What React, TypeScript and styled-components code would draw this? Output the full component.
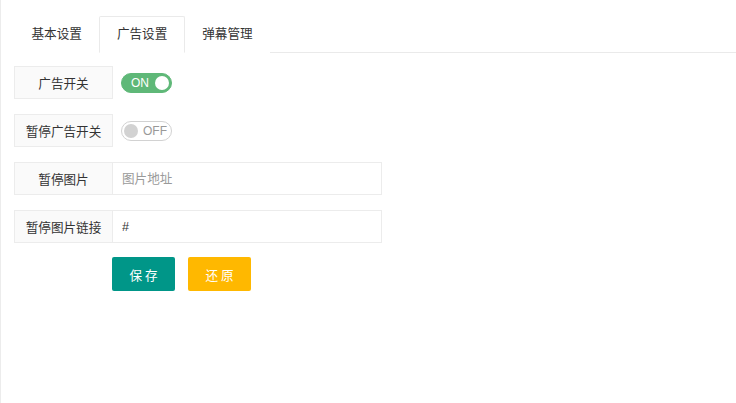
import React from 'react';
import styled, { createGlobalStyle } from 'styled-components';

const GlobalStyle = createGlobalStyle`
  html, body {
    margin: 0;
    padding: 0;
    background: #fff;
  }
  body {
    font-family: "Liberation Sans", "Noto Sans CJK SC", sans-serif;
    color: #333;
  }
  * { box-sizing: border-box; }
`;

const tabs = ['基本设置', '广告设置', '弹幕管理'];

const Switch = ({ on }: { on: boolean }) => (
  <SwitchBox $on={on}>
    {on ? <SwitchText $on>ON</SwitchText> : null}
    <Knob $on={on} />
    {on ? null : <SwitchText $on={false}>OFF</SwitchText>}
  </SwitchBox>
);

const App = () => (
  <Page>
    <GlobalStyle />
    <TabTitle>
      {tabs.map((t, i) => (
        <TabItem key={t} $active={i === 1}>{t}</TabItem>
      ))}
    </TabTitle>
    <Form>
      <Row>
        <Label>广告开关</Label>
        <Field><Switch on /></Field>
      </Row>
      <Row>
        <Label>暂停广告开关</Label>
        <Field><Switch on={false} /></Field>
      </Row>
      <Row>
        <Label>暂停图片</Label>
        <Input placeholder="图片地址" defaultValue="" />
      </Row>
      <Row>
        <Label>暂停图片链接</Label>
        <Input defaultValue="#" />
      </Row>
      <Actions>
        <Button $color="#009688">保存</Button>
        <Button $color="#FFB800">还原</Button>
      </Actions>
    </Form>
  </Page>
);

export default App;

const Page = styled.div`
  min-height: 100vh;
  border-left: 1px solid #ececec;
  padding: 16px 0 0 13px;
`;

const TabTitle = styled.ul`
  display: flex;
  margin: 0;
  padding: 0;
  list-style: none;
  height: 37px;
  border-bottom: 1px solid #eaeaea;
`;

const TabItem = styled.li<{ $active: boolean }>`
  height: 37px;
  line-height: 35px;
  padding: 0 16.5px;
  font-size: 12.6px;
  color: #333;
  border: 1px solid ${({ $active }) => ($active ? '#eaeaea' : 'transparent')};
  border-bottom-color: ${({ $active }) => ($active ? '#fff' : 'transparent')};
  background: #fff;
  border-radius: 2px 2px 0 0;
  cursor: pointer;
`;

const Form = styled.form`
  padding-top: 13px;
  width: 368px;
`;

const Row = styled.div`
  display: flex;
  height: 33px;
  margin-bottom: 15px;
`;

const Label = styled.label`
  flex: 0 0 99px;
  display: flex;
  align-items: center;
  justify-content: center;
  background: #fafafa;
  border: 1px solid #ececec;
  font-size: 12.6px;
  color: #333;
`;

const Field = styled.div`
  display: flex;
  align-items: center;
  padding-left: 8px;
`;

const Input = styled.input`
  flex: 1;
  height: 33px;
  border: 1px solid #ececec;
  border-left: none;
  padding: 0 9px;
  font-size: 12.6px;
  font-family: "Liberation Sans", "Noto Sans CJK SC", sans-serif;
  color: #333;
  outline: none;
  &::placeholder {
    color: #9a9a9a;
  }
`;

const SwitchBox = styled.div<{ $on: boolean }>`
  width: 51px;
  height: 20px;
  border-radius: 20px;
  display: flex;
  align-items: center;
  justify-content: space-between;
  padding-left: ${({ $on }) => ($on ? '9px' : '2px')};
  padding-right: ${({ $on }) => ($on ? '2px' : '4px')};
  background: ${({ $on }) => ($on ? '#5FB878' : '#fff')};
  border: 1px solid ${({ $on }) => ($on ? '#5FB878' : '#d2d2d2')};
`;

const SwitchText = styled.span<{ $on: boolean }>`
  font-size: 12px;
  line-height: 1;
  color: ${({ $on }) => ($on ? '#fff' : '#999')};
`;

const Knob = styled.span<{ $on: boolean }>`
  width: 14px;
  height: 14px;
  border-radius: 50%;
  background: ${({ $on }) => ($on ? '#fff' : '#d2d2d2')};
`;

const Actions = styled.div`
  display: flex;
  gap: 13px;
  padding-left: 98px;
  margin-top: -1px;
`;

const Button = styled.button<{ $color: string }>`
  width: 63px;
  height: 34px;
  border: none;
  border-radius: 2px;
  background: ${({ $color }) => $color};
  color: #fff;
  font-size: 12.6px;
  letter-spacing: 3px;
  text-indent: 3px;
  font-family: "Liberation Sans", "Noto Sans CJK SC", sans-serif;
  cursor: pointer;
`;
